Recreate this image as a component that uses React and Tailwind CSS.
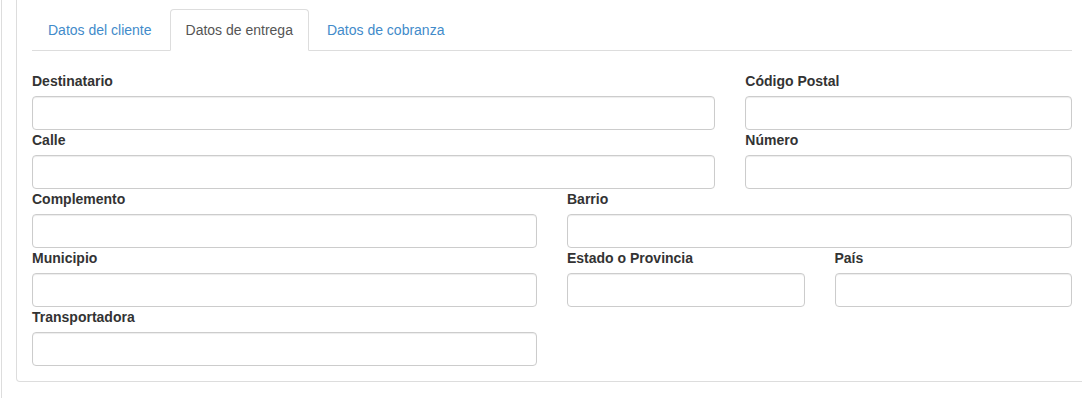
import { useState } from 'react';

const tabs = ['Datos del cliente', 'Datos de entrega', 'Datos de cobranza'];

const filas = [
  [
    { label: 'Destinatario', span: 'col-span-8' },
    { label: 'Código Postal', span: 'col-span-4' },
  ],
  [
    { label: 'Calle', span: 'col-span-8' },
    { label: 'Número', span: 'col-span-4' },
  ],
  [
    { label: 'Complemento', span: 'col-span-6' },
    { label: 'Barrio', span: 'col-span-6' },
  ],
  [
    { label: 'Municipio', span: 'col-span-6' },
    { label: 'Estado o Provincia', span: 'col-span-3' },
    { label: 'País', span: 'col-span-3' },
  ],
  [
    { label: 'Transportadora', span: 'col-span-6' },
  ],
];

function Campo({ label, span }) {
  return (
    <div className={span}>
      <label className="block font-bold text-[14px] leading-[20px] mb-[5px] text-[#333]">{label}</label>
      <input
        type="text"
        className="block w-full h-[34px] px-3 border border-[#ccc] rounded-[4px] bg-white shadow-[inset_0_1px_1px_rgba(0,0,0,0.075)] outline-none"
      />
    </div>
  );
}

export default function App() {
  const [activo, setActivo] = useState(1);

  return (
    <div
      className="w-[1082px] h-[398px] overflow-hidden bg-white flex text-[#333]"
      style={{ fontFamily: '"Liberation Sans", Arial, Helvetica, sans-serif' }}
    >
      <div className="ml-px w-px h-full bg-[#ddd] shrink-0" />
      <div className="pl-[14px] shrink-0">
        <div className="w-[1072px] border border-t-0 border-[#ddd] rounded-b-[4px] px-[15px] pt-[9px] pb-[15px]">
          {/* Pestañas */}
          <ul className="flex border-b border-[#ddd]">
            {tabs.map((t, i) => (
              <li key={t} className="-mb-px mr-[2px]">
                <button
                  onClick={() => setActivo(i)}
                  className={`h-[42px] px-[15px] text-[14px] leading-[20px] border rounded-t-[4px] ${
                    i === activo
                      ? 'border-[#ddd] border-b-transparent bg-white text-[#555]'
                      : 'border-transparent text-[#428bca]'
                  }`}
                >
                  {t}
                </button>
              </li>
            ))}
          </ul>

          {/* Formulario de entrega */}
          <div className="mt-5">
            {filas.map((fila, idx) => (
              <div key={idx} className="grid grid-cols-12 gap-x-[30px]">
                {fila.map(c => (
                  <Campo key={c.label} label={c.label} span={c.span} />
                ))}
              </div>
            ))}
          </div>
        </div>
      </div>
    </div>
  );
}
